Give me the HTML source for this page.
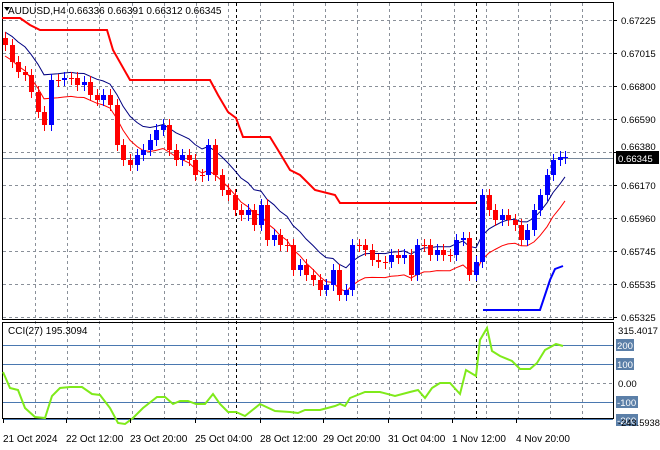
<!DOCTYPE html>
<html><head><meta charset="utf-8"><style>
body{margin:0;background:#fff;width:660px;height:450px;overflow:hidden;font-family:"Liberation Sans",sans-serif}
svg{position:absolute;left:0;top:0}
text{font-family:"Liberation Sans",sans-serif;font-size:10px;fill:#000}
.ax{font-size:9.6px}
</style></head><body>
<svg id="s" width="660" height="450" xmlns="http://www.w3.org/2000/svg">
<g id="grid" stroke="#8a9099" stroke-width="1" stroke-dasharray="3,3"></g>
<rect x="2.5" y="2.5" width="611" height="317" fill="none" stroke="#000"/>
<rect x="2.5" y="322.5" width="611" height="96" fill="none" stroke="#000"/>
<line x1="3" y1="158.5" x2="613" y2="158.5" stroke="#77889a"/>
<g stroke="#4a78b0" stroke-width="1">
<line x1="3" y1="345.5" x2="613" y2="345.5"/><line x1="3" y1="364.5" x2="613" y2="364.5"/>
<line x1="3" y1="402.5" x2="613" y2="402.5"/><line x1="3" y1="419.5" x2="613" y2="419.5"/>
</g>
<line x1="236.5" y1="3" x2="236.5" y2="418" stroke="#000" stroke-dasharray="3,3"/>
<line x1="476.5" y1="3" x2="476.5" y2="418" stroke="#000" stroke-dasharray="3,3"/>
<g id="ind"></g>
<g id="cd"></g>
<polyline fill="none" stroke="#ff0000" stroke-width="2" points="2,18 20,18 30,25 40,30 107,30 113,50 130,80 210,80 218,95 228,112 236,118 243,137 270,137 278,150 290,170 300,175 315,190 335,195 340,203 476,203"/>
<polyline fill="none" stroke="#0000ff" stroke-width="2" points="483,310 540,310 550,280 555,269 563,266"/>
<polyline fill="none" stroke="#7fea1a" stroke-width="2" points="3,372 10,388 18,390 25,408 35,417 45,418 52,396 60,388 70,387 82,387 92,394 100,395 110,408 118,423 125,424 133,418 143,408 157,397 165,397 173,404 180,401 188,401 196,404 205,404 213,394 220,404 228,412 236,412 245,416 260,404 275,411 290,412 298,413 305,410 320,410 335,406 340,404 345,406 350,398 365,392 380,392 395,396 410,392 418,390 425,398 432,388 440,383 450,383 460,394 466,370 476,376 480,340 487,328 492,351 500,356 512,361 520,369 530,369 537,363 545,350 556,344 563,346"/>
<g id="lab"></g>
<text x="8" y="14">AUDUSD,H4  0.66336 0.66391 0.66312 0.66345</text>
<path d="M4 7 L10 7 L7 11 Z" fill="#000"/>
<text x="8" y="334">CCI(27) 195.3094</text>
<rect x="616" y="151" width="43" height="13" fill="#000"/>
<text class="ax" x="618" y="162" style="fill:#fff">0.66345</text>
<text class="ax" x="618" y="334">315.4017</text>
<rect x="616" y="339" width="18" height="12" fill="#5b7fa8"/><text class="ax" x="617" y="349" style="fill:#fff">200</text>
<rect x="616" y="358" width="18" height="12" fill="#5b7fa8"/><text class="ax" x="617" y="368" style="fill:#fff">100</text>
<text class="ax" x="618" y="387">0.00</text>
<rect x="616" y="396" width="22" height="12" fill="#5b7fa8"/><text class="ax" x="617" y="406" style="fill:#fff">-100</text>
<rect x="616" y="414" width="22" height="12" fill="#5b7fa8"/><text class="ax" x="617" y="424" style="fill:#fff">-200</text>
<text x="618" y="426" style="font-size:9.3px">-243.5938</text>
<g id="dt"></g>
</svg>
<script>
var s=document.getElementById('s'),NS='http://www.w3.org/2000/svg';
function el(p,t,a,txt){var e=document.createElementNS(NS,t);for(var k in a)e.setAttribute(k,a[k]);if(txt)e.textContent=txt;document.getElementById(p).appendChild(e);return e;}
for(var x=35;x<613;x+=32.2){var xx=Math.round(x)+.5;if(Math.abs(xx-236)<6||Math.abs(xx-476)<6)continue;el('grid','line',{x1:xx,y1:3,x2:xx,y2:418});}
var py=[20,53,86,119,152,185,218,251,284,317],pl=['0.67225','0.67015','0.66800','0.66590','0.66380','0.66170','0.65960','0.65745','0.65535','0.65325'];
py.forEach(function(y,i){el('grid','line',{x1:3,y1:y+.5,x2:613,y2:y+.5});if(i!=4)el('lab','text',{x:621,y:y+4,'class':'ax'},pl[i]);else el('lab','text',{x:621,y:y-2,'class':'ax'},pl[i]);el('lab','line',{x1:613,y1:y+.5,x2:617,y2:y+.5,stroke:'#000'});});
el('grid','line',{x1:3,y1:383.5,x2:613,y2:383.5});
var d=[[5,45],[12,62],[18,72],[25,75],[31,92],[38,112],[44,125],[51,80],[58,80],[64,78],[71,78],[77,85],[84,82],[90,95],[97,100],[103,95],[110,105],[117,145],[123,160],[130,165],[137,155],[143,150],[150,140],[156,130],[163,125],[169,150],[176,160],[182,155],[189,160],[195,175],[202,175],[208,145],[215,175],[222,190],[228,195],[235,210],[241,215],[248,210],[254,225],[261,205],[267,240],[274,235],[280,245],[287,245],[293,270],[300,265],[306,275],[313,280],[320,290],[326,285],[333,270],[339,295],[346,290],[352,245],[359,245],[365,250],[372,260],[378,262],[385,262],[391,255],[398,258],[404,255],[411,275],[417,245],[424,245],[430,255],[437,250],[443,255],[450,255],[456,240],[463,238],[469,275],[476,262],[482,195],[489,210],[495,220],[502,215],[508,220],[515,225],[521,240],[527,230],[534,210],[540,195],[547,175],[553,160],[560,157],[565,157]];
var ema=60,bl=[],rl=[],prev=38;
d.forEach(function(c,i){ema=i==0?40:ema+(c[1]-ema)*0.2;bl.push(c[0]+','+(ema-8).toFixed(1));rl.push(c[0]+','+(ema+16).toFixed(1));
var o=prev,cl=c[1];if(i==d.length-1){o=158;cl=157;}var up=cl<o,col=up?'#0000ff':'#ff0000';
var t=Math.min(o,cl),b=Math.max(o,cl);if(b-t<1)b=t+1;
el('cd','line',{x1:c[0]+.5,y1:t-6,x2:c[0]+.5,y2:b+6,stroke:col});
el('cd','rect',{x:c[0]-2,y:t,width:5,height:b-t,fill:col});prev=cl;});
el('ind','polyline',{points:bl.join(' '),fill:'none',stroke:'#000080','stroke-width':1});
el('ind','polyline',{points:rl.join(' '),fill:'none',stroke:'#ff0000','stroke-width':1});
[['21 Oct 2024',3],['22 Oct 12:00',66],['23 Oct 20:00',130],['25 Oct 04:00',195],['28 Oct 12:00',260],['29 Oct 20:00',323],['31 Oct 04:00',388],['1 Nov 12:00',452],['4 Nov 20:00',516]].forEach(function(a){el('dt','text',{x:a[1],y:442},a[0]);el('dt','line',{x1:a[1]+.5,y1:419,x2:a[1]+.5,y2:423,stroke:'#000'});});
</script>
</body></html>
